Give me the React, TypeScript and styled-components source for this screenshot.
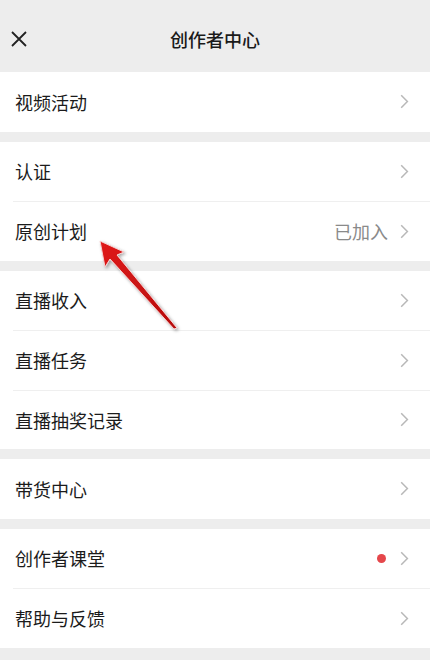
import React from "react";
import styled, { createGlobalStyle } from "styled-components";

const Global = createGlobalStyle`
  html, body { margin: 0; padding: 0; background: #ededed; }
  body { font-family: "Noto Sans CJK SC", "Noto Sans", sans-serif; -webkit-font-smoothing: antialiased; }
`;

const Page = styled.div`
  position: relative;
  width: 430px;
  min-height: 660px;
  background: #ededed;
  display: flex;
  flex-direction: column;
  gap: 10px;
`;

const Header = styled.header`
  height: 72px;
  box-sizing: border-box;
  padding-top: 5px;
  display: grid;
  grid-template-columns: 60px 1fr 60px;
  align-items: center;
  margin-bottom: -10px;
`;

const CloseBtn = styled.div`
  display: flex;
  align-items: center;
  padding-left: 10px;
  color: #1c1c1c;
`;

const Title = styled.h1`
  margin: 0;
  text-align: center;
  font-size: 18px;
  font-weight: 500;
  color: #1a1a1a;
  line-height: 1;
`;

const Section = styled.section`
  background: #fff;
  padding-left: 13px;
`;

const Row = styled.div<{ $first?: boolean }>`
  height: 59.5px;
  box-sizing: border-box;
  display: flex;
  align-items: center;
  padding-left: 2px;
  padding-right: 21px;
  border-top: ${(p) => (p.$first ? "none" : "1px solid #efefef")};
`;

const Label = styled.span`
  flex: 1;
  font-size: 18px;
  color: #1b1b1b;
  line-height: 1;
`;

const Extra = styled.span`
  font-size: 18px;
  color: #8a8a8a;
  line-height: 1;
  margin-right: 12px;
`;

const Dot = styled.span`
  width: 9px;
  height: 9px;
  border-radius: 50%;
  background: #e5474b;
  margin-right: 14px;
`;

const Chevron = () => (
  <svg width="9" height="15" viewBox="0 0 9 15" fill="none">
    <path d="M1.2 1.2 L7.4 7.5 L1.2 13.8" stroke="#b8b8b8" strokeWidth="1.5" strokeLinejoin="miter" />
  </svg>
);

const ArrowLayer = styled.svg`
  position: absolute;
  left: 0;
  top: 0;
  pointer-events: none;
`;

type Item = { label: string; extra?: string; dot?: boolean };

const sections: Item[][] = [
  [{ label: "视频活动" }],
  [{ label: "认证" }, { label: "原创计划", extra: "已加入" }],
  [{ label: "直播收入" }, { label: "直播任务" }, { label: "直播抽奖记录" }],
  [{ label: "带货中心" }],
  [{ label: "创作者课堂", dot: true }, { label: "帮助与反馈" }],
];

export default function App() {
  return (
    <>
      <Global />
      <Page>
        <Header>
          <CloseBtn>
            <svg width="18" height="18" viewBox="0 0 18 18">
              <path d="M2 2 L16 16 M16 2 L2 16" stroke="#222" strokeWidth="1.8" />
            </svg>
          </CloseBtn>
          <Title>创作者中心</Title>
          <div />
        </Header>
        {sections.map((sec, i) => (
          <Section key={i}>
            {sec.map((it, j) => (
              <Row key={it.label} $first={j === 0}>
                <Label>{it.label}</Label>
                {it.extra && <Extra>{it.extra}</Extra>}
                {it.dot && <Dot />}
                <Chevron />
              </Row>
            ))}
          </Section>
        ))}
        <ArrowLayer width="430" height="660" viewBox="0 0 430 660">
          <defs>
            <filter id="sh" x="-50%" y="-50%" width="200%" height="200%">
              <feDropShadow dx="1.5" dy="1.5" stdDeviation="1.5" floodColor="#000" floodOpacity="0.35" />
            </filter>
            <linearGradient id="rg" x1="0" y1="0" x2="1" y2="1">
              <stop offset="0" stopColor="#e01a1a" />
              <stop offset="1" stopColor="#b50d0d" />
            </linearGradient>
          </defs>
          <polygon
            points="100,241 124,252 117,255 177,328 174,329 110,259 105,267"
            fill="url(#rg)"
            stroke="#f6d0d0"
            strokeWidth="1"
            strokeLinejoin="round"
            filter="url(#sh)"
          />
        </ArrowLayer>
      </Page>
    </>
  );
}
